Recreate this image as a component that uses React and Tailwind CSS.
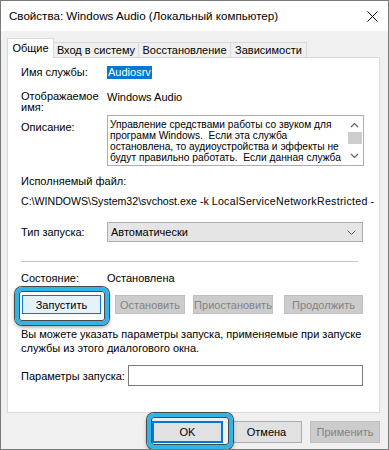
export default function App() {
  const label = "w-[86px] shrink-0";
  return (
    <div className="relative w-[389px] h-[450px] overflow-hidden bg-[#f0f0f0] border border-[#7a7a7a] flex flex-col font-['Liberation_Sans',Arial,sans-serif] text-[11px] leading-[14px] text-black">
      {/* title bar */}
      <div className="h-[30px] shrink-0 bg-white flex items-center justify-between pl-[8px] pr-[10px]">
        <span className="text-[11.6px]">Свойства: Windows Audio (Локальный компьютер)</span>
        <svg width="11" height="11" viewBox="0 0 11 11">
          <path d="M0.5 0.5L10.5 10.5M10.5 0.5L0.5 10.5" stroke="#000" strokeWidth="1" fill="none" />
        </svg>
      </div>

      <div className="pl-[6px] pr-[8px] pt-[7px]">
        {/* tabs */}
        <div className="flex items-end h-[19px]">
          <div className="relative z-10 h-[20px] -mb-px w-[47px] bg-white border border-b-0 border-[#d9d9d9] flex items-center justify-center pb-[2px]">
            Общие
          </div>
          <div className="h-[15px] w-[85px] border-t border-r border-[#d9d9d9] flex items-center justify-center">Вход в систему</div>
          <div className="h-[15px] w-[92px] border-t border-r border-[#d9d9d9] flex items-center justify-center">Восстановление</div>
          <div className="h-[15px] w-[76px] border-t border-r border-[#d9d9d9] flex items-center justify-center">Зависимости</div>
        </div>

        {/* panel */}
        <div className="h-[356px] bg-white border border-[#d9d9d9] pl-[13px]">
          <div className="mt-[7px] h-[14px] flex items-center">
            <span className={label}>Имя службы:</span>
            <span className="bg-[#0078d7] text-white px-[1px] leading-[13px]">Audiosrv</span>
          </div>

          <div className="mt-[12px] h-[22px] flex">
            <span className={label + " leading-[11px]"}>
              Отображаемое
              <br />
              имя:
            </span>
            <span className="leading-[12px]">Windows Audio</span>
          </div>

          <div className="mt-[2px] flex">
            <span className={label + " pt-[5px]"}>Описание:</span>
            <div className="w-[257px] h-[51px] border border-[#abadb3] flex">
              <div className="flex-1 pl-[2px] pt-[3px]">
                <div className="text-[10.2px] leading-[11px]">
                  Управление средствами работы со звуком для программ Windows.&nbsp; Если эта служба остановлена, то аудиоустройства и эффекты не будут правильно работать.&nbsp; Если данная служба
                </div>
              </div>
              <div className="w-[17px] shrink-0 flex flex-col items-center bg-white">
                <svg width="9" height="6" viewBox="0 0 9 6" className="mt-[6px]">
                  <path d="M1 5L4.5 1.5L8 5" stroke="#606060" strokeWidth="1.2" fill="none" />
                </svg>
                <div className="mt-[4px] w-[14px] h-[12px] bg-[#cdcdcd]" />
                <svg width="9" height="6" viewBox="0 0 9 6" className="mt-auto mb-[6px]">
                  <path d="M1 1L4.5 4.5L8 1" stroke="#606060" strokeWidth="1.2" fill="none" />
                </svg>
              </div>
            </div>
          </div>

          <div className="mt-[8px]">Исполняемый файл:</div>
          <div className="mt-[6px] w-[353px] whitespace-nowrap overflow-hidden text-[10.6px]">
            C:\WINDOWS\System32\svchost.exe -k <span className="tracking-[0.3px]">LocalServiceNetworkRestricted</span> -p
          </div>

          <div className="mt-[14px] flex items-center">
            <span className={label}>Тип запуска:</span>
            <div className="w-[256px] h-[20px] bg-[#e5e5e5] border border-[#adadad] flex items-center justify-between pl-[3px] pr-[6px]">
              <span>Автоматически</span>
              <svg width="9" height="5" viewBox="0 0 9 5">
                <path d="M0.5 0.5L4.5 4.5L8.5 0.5" stroke="#606060" strokeWidth="1" fill="none" />
              </svg>
            </div>
          </div>

          <div className="mt-[19px] w-[337px] h-px bg-[#c8c8c8]" />

          <div className="mt-[9px] flex">
            <span className={label}>Состояние:</span>
            <span>Остановлена</span>
          </div>

          <div className="mt-[10px] h-[19px] flex">
            <div className="ml-[1px] w-[79px] bg-[#e5f1fb] border border-[#0078d7] flex items-center justify-center">Запустить</div>
            <div className="ml-[14px] w-[70px] bg-[#cccccc] border border-[#bfbfbf] text-[#838383] flex items-center justify-center">Остановить</div>
            <div className="ml-[8px] w-[80px] bg-[#cccccc] border border-[#bfbfbf] text-[#838383] flex items-center justify-center">Приостановить</div>
            <div className="ml-[11px] w-[79px] bg-[#cccccc] border border-[#bfbfbf] text-[#838383] flex items-center justify-center">Продолжить</div>
          </div>

          <div className="mt-[13px]">
            Вы можете указать параметры запуска, применяемые при запуске
            <br />
            службы из этого диалогового окна.
          </div>

          <div className="mt-[10px] flex items-center">
            <span className="w-[107px] shrink-0">Параметры запуска:</span>
            <div className="w-[235px] h-[21px] bg-white border border-[#7a7a7a]" />
          </div>
        </div>

        {/* bottom buttons */}
        <div className="mt-[8px] h-[22px] flex justify-end gap-[8px]">
          <div className="w-[71px] bg-[#e1e1e1] border-2 border-[#0078d7] flex items-center justify-center">OK</div>
          <div className="w-[71px] bg-[#e1e1e1] border border-[#adadad] flex items-center justify-center">Отмена</div>
          <div className="w-[70px] bg-[#cccccc] border border-[#bfbfbf] text-[#838383] flex items-center justify-center">Применить</div>
        </div>
      </div>

      {/* annotation highlights */}
      <div className="absolute left-[14px] top-[286px] w-[94px] h-[38px] rounded-[7px] border-[4px] border-[#2fb4e9] shadow-[0_0_0_1px_#4a4a4a,inset_0_0_0_1px_#4a4a4a,0_2px_4px_rgba(0,0,0,0.4)]" />
      <div className="absolute left-[146px] top-[412px] w-[86px] h-[36px] rounded-[7px] border-[4px] border-[#2fb4e9] shadow-[0_0_0_1px_#4a4a4a,inset_0_0_0_1px_#4a4a4a,0_2px_4px_rgba(0,0,0,0.4)]" />
    </div>
  );
}
